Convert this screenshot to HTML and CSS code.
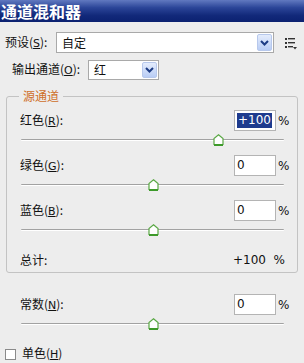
FILE: index.html
```html
<!DOCTYPE html>
<html>
<head>
<meta charset="utf-8">
<link rel="stylesheet" href="styles.css">
</head>
<body>
<div class="panel">
  <div class="title">通道混和器</div>

  <div class="row preset">
    <span class="lbl lbl-preset">预设(<u>S</u>):</span>
    <div class="select sel-wide">
      <span class="val">自定</span>
      <span class="arrow"><svg width="9" height="6" viewBox="0 0 9 6"><path d="M1 1 L4.5 4.5 L8 1" fill="none" stroke="#1d3c84" stroke-width="2"/></svg></span>
    </div>
    <svg class="menu" width="12" height="13" viewBox="0 0 12 13">
      <rect x="0" y="1" width="2" height="2" fill="#333"/>
      <rect x="3" y="1" width="7" height="1.4" fill="#333"/>
      <rect x="0" y="5" width="2" height="2" fill="#333"/>
      <rect x="3" y="5" width="7" height="1.4" fill="#333"/>
      <rect x="0" y="9" width="2" height="2" fill="#333"/>
      <rect x="3" y="9" width="5" height="1.4" fill="#333"/>
      <path d="M8 10 L12 10 L10 12.5 Z" fill="#333"/>
    </svg>
  </div>

  <div class="row output">
    <span class="lbl lbl-output">输出通道(<u>O</u>):</span>
    <div class="select sel-narrow">
      <span class="val">红</span>
      <span class="arrow"><svg width="9" height="6" viewBox="0 0 9 6"><path d="M1 1 L4.5 4.5 L8 1" fill="none" stroke="#1d3c84" stroke-width="2"/></svg></span>
    </div>
  </div>

  <div class="group">
    <div class="legend">源通道</div>

    <div class="chan">
      <div class="chan-top">
        <span class="lbl">红色(<u>R</u>):</span>
        <div class="num"><span class="sel">+100</span></div>
        <span class="pct">%</span>
      </div>
      <div class="slider"><div class="track"></div><svg class="thumb" style="left:75%" width="11" height="12" viewBox="0 0 11 12"><path d="M5.5 0.8 L10 4.5 L10 10.5 L1 10.5 L1 4.5 Z" fill="#fff" stroke="#5aa845" stroke-width="1.2"/><rect x="1" y="10" width="9" height="2" fill="#3d9a2a"/></svg></div>
    </div>

    <div class="chan">
      <div class="chan-top">
        <span class="lbl">绿色(<u>G</u>):</span>
        <div class="num">0</div>
        <span class="pct">%</span>
      </div>
      <div class="slider"><div class="track"></div><svg class="thumb" style="left:50%" width="11" height="12" viewBox="0 0 11 12"><path d="M5.5 0.8 L10 4.5 L10 10.5 L1 10.5 L1 4.5 Z" fill="#fff" stroke="#5aa845" stroke-width="1.2"/><rect x="1" y="10" width="9" height="2" fill="#3d9a2a"/></svg></div>
    </div>

    <div class="chan">
      <div class="chan-top">
        <span class="lbl">蓝色(<u>B</u>):</span>
        <div class="num">0</div>
        <span class="pct">%</span>
      </div>
      <div class="slider"><div class="track"></div><svg class="thumb" style="left:50%" width="11" height="12" viewBox="0 0 11 12"><path d="M5.5 0.8 L10 4.5 L10 10.5 L1 10.5 L1 4.5 Z" fill="#fff" stroke="#5aa845" stroke-width="1.2"/><rect x="1" y="10" width="9" height="2" fill="#3d9a2a"/></svg></div>
    </div>

    <div class="total">
      <span class="lbl">总计:</span>
      <span class="total-val">+100&nbsp;&nbsp;%</span>
    </div>
  </div>

  <div class="chan const">
    <div class="chan-top">
      <span class="lbl">常数(<u>N</u>):</span>
      <div class="num">0</div>
      <span class="pct">%</span>
    </div>
    <div class="slider"><div class="track"></div><svg class="thumb" style="left:50%" width="11" height="12" viewBox="0 0 11 12"><path d="M5.5 0.8 L10 4.5 L10 10.5 L1 10.5 L1 4.5 Z" fill="#fff" stroke="#5aa845" stroke-width="1.2"/><rect x="1" y="10" width="9" height="2" fill="#3d9a2a"/></svg></div>
  </div>

  <div class="mono">
    <span class="check"></span>
    <span class="lbl">单色(<u>H</u>)</span>
  </div>
</div>
</body>
</html>
```

FILE: styles.css
```css
* { box-sizing: border-box; }
html, body {
  margin: 0;
  padding: 0;
  background: #ededed;
  overflow: hidden;
}
.panel {
  width: 304px;
  height: 363px;
  overflow: hidden;
  background: #ededed;
  font-family: "Noto Sans CJK SC", "DejaVu Sans", sans-serif;
  font-size: 12px;
  color: #111;
}
.title {
  height: 22px;
  background: linear-gradient(#6179c0 0%, #2b4598 35%, #12297a 70%, #0b2170 100%);
  color: #fff;
  font-weight: bold;
  font-size: 16px;
  line-height: 22px;
  padding-left: 1px;
}
.row {
  display: flex;
  align-items: center;
}
.preset {
  margin-top: 10px;
  height: 21px;
  padding-left: 5px;
}
.output {
  margin-top: 7px;
  height: 20px;
  padding-left: 12px;
}
.lbl {
  white-space: nowrap;
  line-height: 16px;
}
.lbl u {
  font-family: "DejaVu Sans", sans-serif;
  font-size: 11px;
}
.lbl-preset { width: 51px; }
.lbl-output { width: 76px; }
.select {
  display: flex;
  align-items: center;
  background: #fff;
  border: 1px solid #a9a9a9;
  height: 100%;
  padding: 1px;
}
.sel-wide { width: 218px; }
.sel-narrow { width: 71px; }
.select .val {
  flex: 1;
  padding-left: 4px;
  line-height: 16px;
}
.arrow {
  width: 15px;
  height: 100%;
  background: linear-gradient(#e4ecfc, #b9cdf5);
  border: 1px solid #b7c8ec;
  border-radius: 2px;
  display: flex;
  align-items: center;
  justify-content: center;
}
.menu {
  margin-left: 11px;
  margin-top: 1px;
}
.group {
  position: relative;
  margin: 16px 6px 0 6px;
  border: 1px solid #c3c3c3;
  border-radius: 3px;
  padding: 13px 0 0 13px;
  height: 177px;
}
.legend {
  position: absolute;
  top: -9px;
  left: 12px;
  padding: 0 4px;
  background: #ededed;
  color: #cf6f2a;
  line-height: 16px;
}
.chan {
  height: 45px;
}
.chan-top {
  display: flex;
  align-items: center;
  height: 21px;
}
.chan-top .lbl {
  width: 214px;
}
.num {
  width: 42px;
  height: 21px;
  background: #fff;
  border: 1px solid #b4b4b4;
  font-family: "DejaVu Sans", sans-serif;
  font-size: 12px;
  line-height: 19px;
  padding-left: 2px;
}
.num .sel {
  background: #1e3b8e;
  color: #fff;
  display: inline-block;
  line-height: 15px;
  padding: 0 1px;
  margin-top: 2px;
}
.pct {
  margin-left: 2px;
  font-family: "DejaVu Sans", sans-serif;
  font-size: 12px;
}
.slider {
  position: relative;
  width: 263px;
  height: 24px;
  margin-left: 1px;
}
.track {
  position: absolute;
  left: 0;
  right: 0;
  top: 8px;
  height: 2px;
  border-top: 1px solid #a2a2a2;
  border-bottom: 1px solid #fff;
  border-radius: 1px;
}
.thumb {
  position: absolute;
  top: 3px;
  margin-left: -5px;
}
.total {
  display: flex;
  align-items: center;
  height: 29px;
}
.total .lbl {
  width: 213px;
}
.total-val {
  font-family: "DejaVu Sans", sans-serif;
  font-size: 12px;
}
.const {
  margin-top: 21px;
  padding-left: 20px;
}
.mono {
  display: flex;
  align-items: center;
  height: 30px;
  padding-left: 5px;
}
.check {
  width: 11px;
  height: 11px;
  border: 1px solid #8a8a8a;
  background: #fff;
  margin-right: 6px;
}
```
